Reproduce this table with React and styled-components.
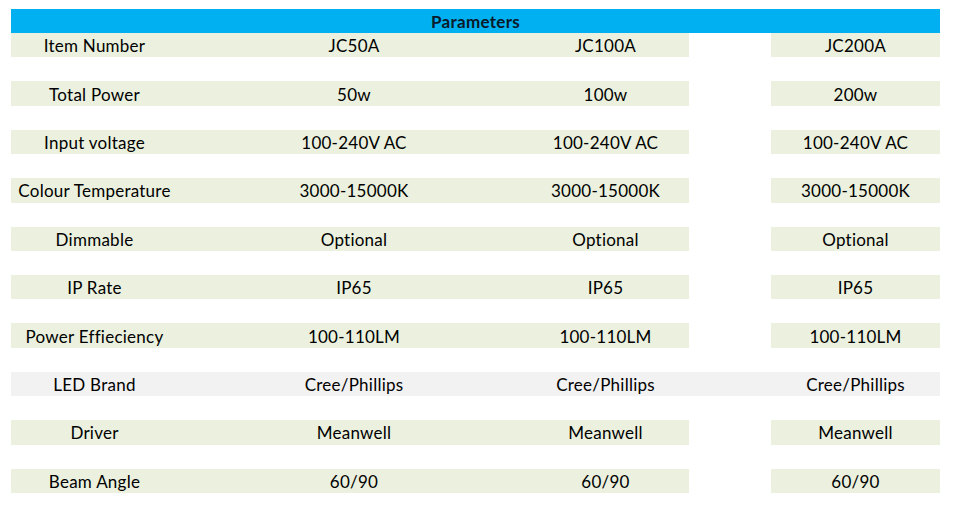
import React from "react";
import styled, { createGlobalStyle } from "styled-components";

const Global = createGlobalStyle`
  html, body { margin: 0; padding: 0; background: #ffffff; }
  body { font-family: Lato, "Noto Sans", sans-serif; color: #000; }
`;

const Sheet = styled.div`
  width: 929px;
  margin: 9px 0 0 11px;
  display: flex;
  flex-direction: column;
`;

const Header = styled.div`
  height: 24px;
  background: #00b0f0;
  display: flex;
  align-items: center;
  justify-content: center;
  font-weight: 700;
  font-size: 17px;
  letter-spacing: 0.3px;
  padding-top: 1px;
  box-sizing: border-box;
  color: #0b1a2a;
`;

const Rows = styled.div`
  display: flex;
  flex-direction: column;
  gap: 24px;
`;

const Row = styled.div`
  height: 24.4px;
  display: grid;
  grid-template-columns: 167px 344px 167px 82px 169px;
  background: ${(p) => (p.$grey ? "#f2f2f2" : "transparent")};
`;

const Cell = styled.div`
  display: flex;
  align-items: center;
  justify-content: center;
  font-size: 17px;
  letter-spacing: 0.25px;
  line-height: 1;
  padding-top: 1px;
  box-sizing: border-box;
  padding-left: ${(p) => p.$shift || 0}px;
  background: ${(p) => (p.$empty ? "transparent" : p.$grey ? "#f2f2f2" : "#ebf1de")};
  white-space: nowrap;
`;

const data = [
  ["Item Number", "JC50A", "JC100A", "JC200A"],
  ["Total Power", "50w", "100w", "200w"],
  ["Input voltage", "100-240V AC", "100-240V AC", "100-240V AC"],
  ["Colour Temperature", "3000-15000K", "3000-15000K", "3000-15000K"],
  ["Dimmable", "Optional", "Optional", "Optional"],
  ["IP Rate", "IP65", "IP65", "IP65"],
  ["Power Effieciency", "100-110LM", "100-110LM", "100-110LM"],
  ["LED Brand", "Cree/Phillips", "Cree/Phillips", "Cree/Phillips", true],
  ["Driver", "Meanwell", "Meanwell", "Meanwell"],
  ["Beam Angle", "60/90", "60/90", "60/90"],
];

export default function App() {
  return (
    <>
      <Global />
      <Sheet>
        <Header>Parameters</Header>
        <Rows>
          {data.map(([label, a, b, c, grey]) => (
            <Row key={label} $grey={grey}>
              <Cell $grey={grey}>{label}</Cell>
              <Cell $grey={grey} $shift={8}>{a}</Cell>
              <Cell $grey={grey}>{b}</Cell>
              <Cell $grey={grey} $empty={!grey} />
              <Cell $grey={grey}>{c}</Cell>
            </Row>
          ))}
        </Rows>
      </Sheet>
    </>
  );
}
